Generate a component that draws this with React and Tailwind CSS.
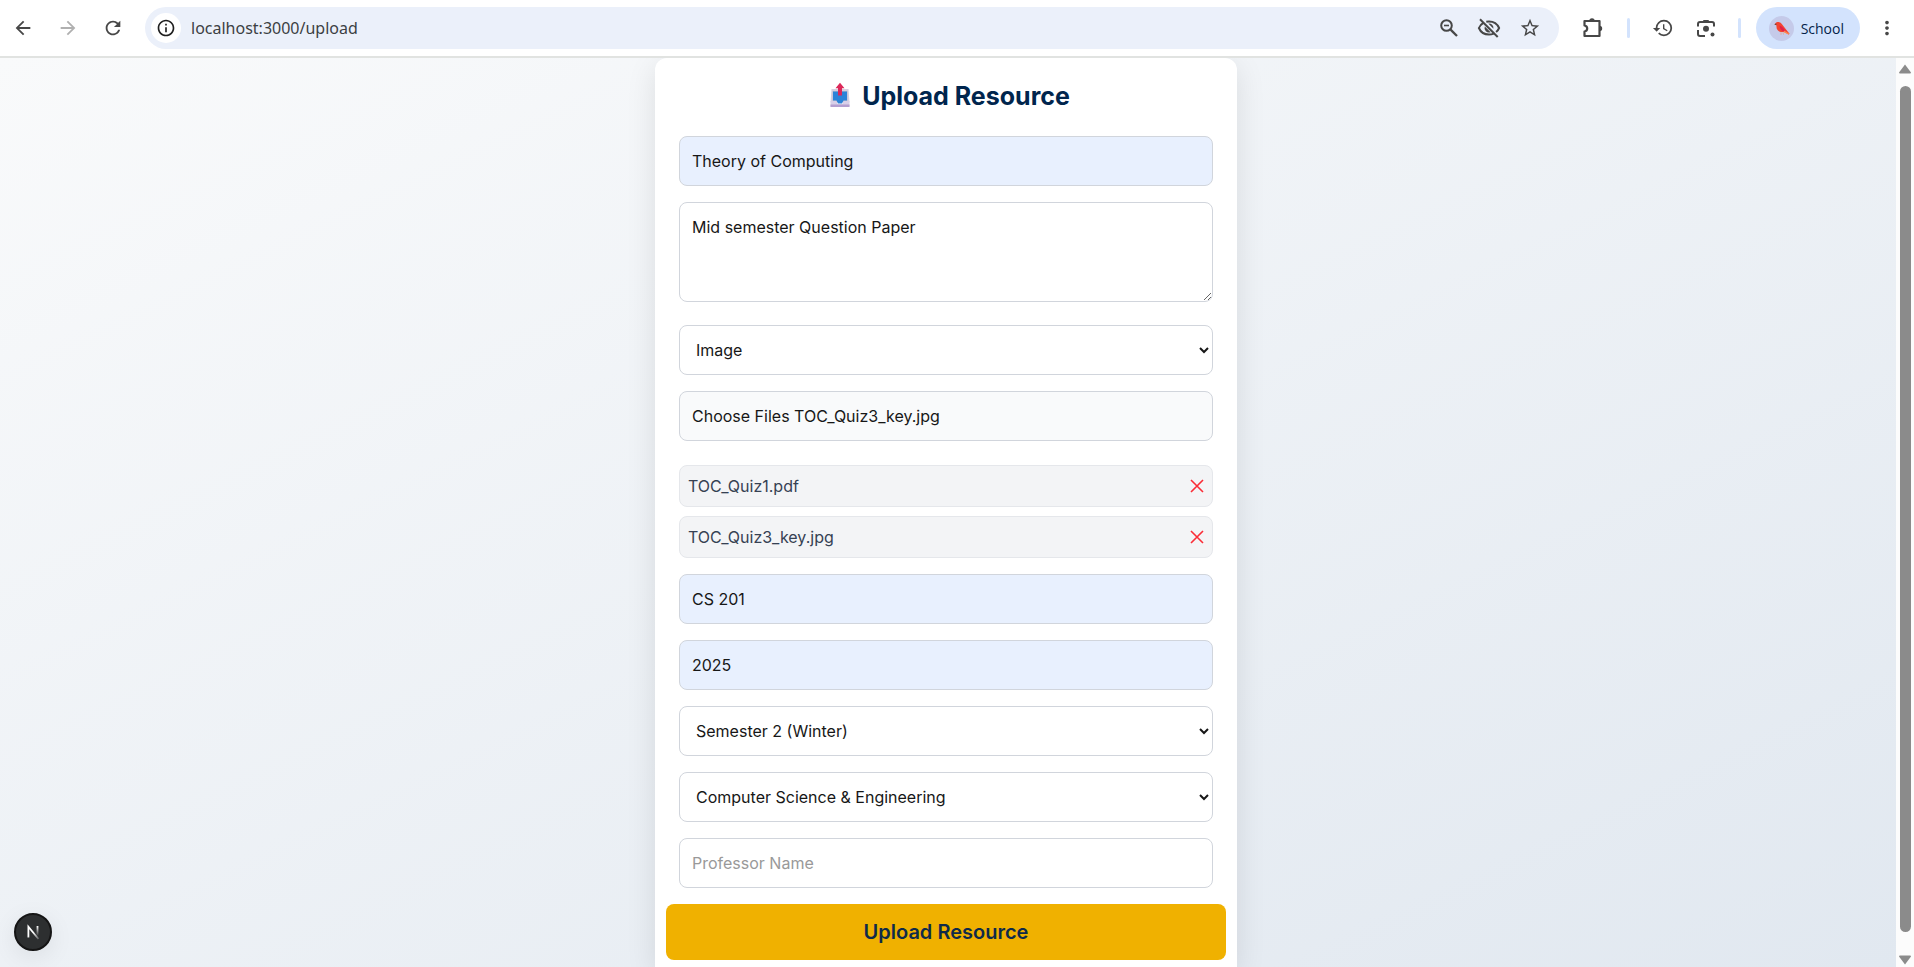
import React from "react";
import {
  MdArrowBack,
  MdArrowForward,
  MdRefresh,
  MdHistory,
  MdMoreVert,
  MdInfoOutline,
  MdStarBorder,
} from "react-icons/md";

function ZoomOutIcon() {
  return (
    <svg className="size-5" viewBox="0 0 20 20" fill="none" stroke="#474747" strokeWidth="2">
      <circle cx="7.5" cy="7.5" r="5.3" />
      <path d="M11.6 11.6 18 18" strokeWidth="2.3" />
      <path d="M5 7.5h5" strokeWidth="1.6" />
    </svg>
  );
}

function EyeOffIcon() {
  return (
    <svg className="size-6" viewBox="0 0 24 24" fill="none" stroke="#474747" strokeWidth="2">
      <path d="M6.3 6.8C4.300 8 2.800 9.700 1.900 12c1.700 4 5.600 6.600 10.100 6.600 1.700 0 3.300-.4 4.700-1" />
      <path d="M9.300 5.700C10.200 5.500 11.100 5.400 12 5.400c4.500 0 8.400 2.600 10.100 6.600-.7 1.600-1.700 3-3 4.100" />
      <path d="M7.800 10.400a4.500 4.500 0 0 0 5.800 5.800z" fill="#474747" stroke="none" />
      <path d="M11.300 7.600a4.500 4.500 0 0 1 5.100 5.100z" fill="#474747" stroke="none" />
      <path d="M3 3.300 20.700 21" />
    </svg>
  );
}

function PuzzleIcon() {
  return (
    <svg className="size-6" viewBox="0 0 24 24" fill="none" stroke="#474747" strokeWidth="2.200" strokeLinejoin="round">
      <path d="M3.500 5h15v15h-15v-4.500c3.600-.6 3.600-5.400 0-6z" />
      <path d="M8.300 5a2.700 2.700 0 0 1 5.400 0zM18.500 9.800a2.700 2.700 0 0 1 0 5.400z" fill="#474747" stroke="none" />
    </svg>
  );
}

function LensIcon() {
  return (
    <svg className="size-5" viewBox="0 0 20 20" fill="none" stroke="#474747" strokeWidth="2">
      <path d="M2 8.500V6a2 2 0 0 1 2-2h12a2 2 0 0 1 2 2v2.500M2 12v4a2 2 0 0 0 2 2h5" />
      <path d="M6.500 4l1-2h5l1 2z" fill="#474747" stroke="none" />
      <circle cx="10" cy="10.800" r="3" fill="#474747" stroke="none" />
      <circle cx="16.500" cy="16.500" r="2" fill="#474747" stroke="none" />
    </svg>
  );
}

function BirdAvatar() {
  return (
    <svg className="size-[25px]" viewBox="0 0 25 25">
      <circle cx="12.500" cy="12.500" r="12.500" fill="#c5cae9" />
      <path d="M5.500 8.200 7.500 6.300c2-.8 4.300 0 5.300 1.800l3.500 4.300 4.200 5.300-1 .7-4.500-2.600c-3 1-6.300-.4-7.300-3.200L7.300 9z" fill="#f4432f" />
      <path d="M10.500 9.500c3 1 5 3.400 6.300 6.300-3 .2-5.800-1.800-6.300-6.300z" fill="#e01f4b" />
      <path d="M15 14.500 20.500 17.700l-1 .8-4.800-2.300z" fill="#ff8a50" />
      <path d="M5.300 8.300 7.300 7.500v1.700z" fill="#5d4037" />
      <path d="M12 16.200v2.600M14 16.200l.5 2.400" stroke="#f0a27a" strokeWidth=".7" />
    </svg>
  );
}

function OutboxIcon() {
  return (
    <svg className="h-7 w-5" viewBox="0 0 20 28" aria-hidden="true">
      <path d="M1.500 7h17l1 13.500H.5z" fill="#d5cfe0" />
      <path d="M2.500 9h15v11h-15z" fill="#c3bccf" />
      <path d="M3 9.500h14v9h-3.500l-1.500 3H8l-1.500-3H3z" fill="#2b83d8" />
      <path d="M.5 19h5.800l1.500 3h4.400l1.500-3h5.800v5.500H.5z" fill="#d8cfe8" />
      <path d="M.5 22.500h19V25H.5z" fill="#b49fd0" />
      <path d="M10 .8 14.500 6.200H12v7.300H8V6.200H5.500z" fill="#dc2859" />
    </svg>
  );
}

function Divider() {
  return <span className="h-5 w-[3px] rounded-full bg-[#d3e3fd]" />;
}

function BrowserBar() {
  return (
    <header className="flex h-[58px] shrink-0 items-center border-b-2 border-[#e1e3e1] bg-white pr-4 pl-3 font-['Open_Sans','Noto_Sans',sans-serif] text-[#474747]">
      <div className="flex items-center gap-[23px]">
        <button aria-label="Back"><MdArrowBack className="size-[22px]" /></button>
        <button aria-label="Forward" className="text-[#b0b0b0]"><MdArrowForward className="size-[22px]" /></button>
        <button aria-label="Reload"><MdRefresh className="size-[22px]" /></button>
      </div>
      <div className="ml-[21px] flex h-[42px] flex-1 items-center rounded-full bg-[#ebf0fa] pr-[18px] pl-1.5">
        <button aria-label="Site information" className="grid size-[30px] place-items-center rounded-full bg-white text-[#1f1f1f]">
          <MdInfoOutline className="size-5" />
        </button>
        <input
          aria-label="Address"
          defaultValue="localhost:3000/upload"
          className="ml-2.5 min-w-0 flex-1 bg-transparent font-['Noto_Sans',sans-serif] text-[16px] text-[#3c3f43] outline-none"
        />
        <div className="flex items-center gap-[18px]">
          <button aria-label="Zoom"><ZoomOutIcon /></button>
          <button aria-label="Tracking protection"><EyeOffIcon /></button>
          <button aria-label="Bookmark"><MdStarBorder className="size-[22px]" /></button>
        </div>
      </div>
      <div className="ml-[22px] flex items-center gap-[22px]">
        <button aria-label="Extensions"><PuzzleIcon /></button>
        <Divider />
        <button aria-label="History"><MdHistory className="size-[22px]" /></button>
        <button aria-label="Search with Lens"><LensIcon /></button>
        <Divider />
      </div>
      <button className="ml-[15px] flex h-[42px] items-center gap-[7px] rounded-full bg-[#d3e3fd] pr-4 pl-[13px] text-[14px] text-[#041e49]">
        <BirdAvatar />
        School
      </button>
      <button aria-label="Menu" className="ml-4"><MdMoreVert className="size-[22px]" /></button>
    </header>
  );
}

const field = "block w-full rounded-lg border border-[#d1d5dc] px-3 text-[16px] leading-6 text-[#171717] outline-none";

function FileRow({ name }) {
  return (
    <li className="flex h-[42px] items-center justify-between rounded-lg border border-[#e5e7eb] bg-[#f3f4f6] px-2 text-[16px] text-[#364153]">
      <span>{name}</span>
      <button type="button" aria-label={`Remove ${name}`}>
        <svg className="h-4 w-3.5" viewBox="0 0 14 16" fill="none" stroke="#fb2c36" strokeWidth="1.600">
          <path d="M1 2l12 12M13 2 1 14" />
        </svg>
      </button>
    </li>
  );
}

function UploadForm() {
  return (
    <div className="w-full max-w-[582px] self-stretch rounded-t-xl bg-white pt-[22px] shadow-[0_8px_30px_rgba(0,0,0,0.1)]">
      <h1 className="flex items-center justify-center gap-3 pl-2 text-[25px] leading-8 font-bold text-[#00254d]">
        <OutboxIcon />
        Upload Resource
      </h1>
      <form className="mt-6" onSubmit={(e) => e.preventDefault()}>
        <div className="flex flex-col gap-4 px-6">
          <input aria-label="Title" defaultValue="Theory of Computing" className={`${field} h-[50px] bg-[#e8f0fe]`} />
          <textarea aria-label="Description" defaultValue="Mid semester Question Paper" className={`${field} mb-[7px] h-[100px] bg-white py-3`} />
          <select aria-label="Resource type" className={`${field} h-[50px] bg-white`}>
            <option>Image</option>
          </select>
          <label className={`${field} flex h-[50px] items-center bg-[#f9fafb]`}>
            <input type="file" multiple className="sr-only" />
            <span className="py-3">Choose Files TOC_Quiz3_key.jpg</span>
          </label>
          <ul className="mt-2 flex flex-col gap-[9px]">
            <FileRow name="TOC_Quiz1.pdf" />
            <FileRow name="TOC_Quiz3_key.jpg" />
          </ul>
          <input aria-label="Course code" defaultValue="CS 201" className={`${field} h-[50px] bg-[#e8f0fe]`} />
          <input aria-label="Year" defaultValue="2025" className={`${field} h-[50px] bg-[#e8f0fe]`} />
          <select aria-label="Semester" className={`${field} h-[50px] bg-white`}>
            <option>Semester 2 (Winter)</option>
          </select>
          <select aria-label="Department" className={`${field} h-[50px] bg-white`}>
            <option>Computer Science &amp; Engineering</option>
          </select>
          <input aria-label="Professor name" placeholder="Professor Name" className={`${field} h-[50px] bg-white placeholder:text-[#999999]`} />
        </div>
        <div className="px-[11px] pt-4">
          <button type="submit" className="h-14 w-full rounded-lg bg-[#f0b100] text-[20px] font-semibold text-[#0f2a4a]">
            Upload Resource
          </button>
        </div>
      </form>
    </div>
  );
}

function ScrollTrack() {
  return (
    <div aria-hidden="true" className="flex w-[18px] shrink-0 flex-col items-center bg-[#fcfcfc] pt-1.5 pb-0.5">
      <svg className="h-[10px] w-3" viewBox="0 0 12 10"><path d="M6 0.500 12 8.500a1 1 0 0 1-1 1H1a1 1 0 0 1-1-1z" fill="#8b8b8b" /></svg>
      <div className="mt-3 mb-[23px] w-[11px] flex-1 rounded-full bg-[#8b8b8b]" />
      <svg className="h-[10px] w-3" viewBox="0 0 12 10"><path d="M6 9.500 0 1.500a1 1 0 0 1 1-1h10a1 1 0 0 1 1 1z" fill="#8b8b8b" /></svg>
    </div>
  );
}

function DevBadge() {
  return (
    <button
      aria-label="Open developer tools"
      className="absolute bottom-4 left-3.5 size-[38px] rounded-full border-2 border-[#151515] bg-[#2d2f30] shadow-[0_6px_24px_rgba(0,0,0,0.08)]"
    >
      <svg className="size-full" viewBox="0 0 34 34" fill="none" strokeWidth="1.800">
        <defs>
          <linearGradient id="stem" x1="0" y1="11" x2="0" y2="21" gradientUnits="userSpaceOnUse">
            <stop stopColor="#fff" />
            <stop offset="1" stopColor="#fff" stopOpacity="0" />
          </linearGradient>
          <linearGradient id="leg" x1="18" y1="17" x2="23" y2="24" gradientUnits="userSpaceOnUse">
            <stop stopColor="#fff" />
            <stop offset="1" stopColor="#fff" stopOpacity="0.200" />
          </linearGradient>
        </defs>
        <path d="M12.400 22.500V11.800L22.500 24" stroke="url(#leg)" />
        <rect x="20.600" y="11" width="1.800" height="10" fill="url(#stem)" />
      </svg>
    </button>
  );
}

export default function App() {
  return (
    <div className="flex h-screen flex-col overflow-hidden font-[Inter,'Liberation_Sans',sans-serif]">
      <BrowserBar />
      <div className="flex min-h-0 flex-1">
        <main className="relative flex min-w-0 flex-1 justify-center overflow-hidden bg-[linear-gradient(to_bottom_right,#f9fafb,#e1e8f0)] pr-1">
          <UploadForm />
          <DevBadge />
        </main>
        <ScrollTrack />
      </div>
    </div>
  );
}
